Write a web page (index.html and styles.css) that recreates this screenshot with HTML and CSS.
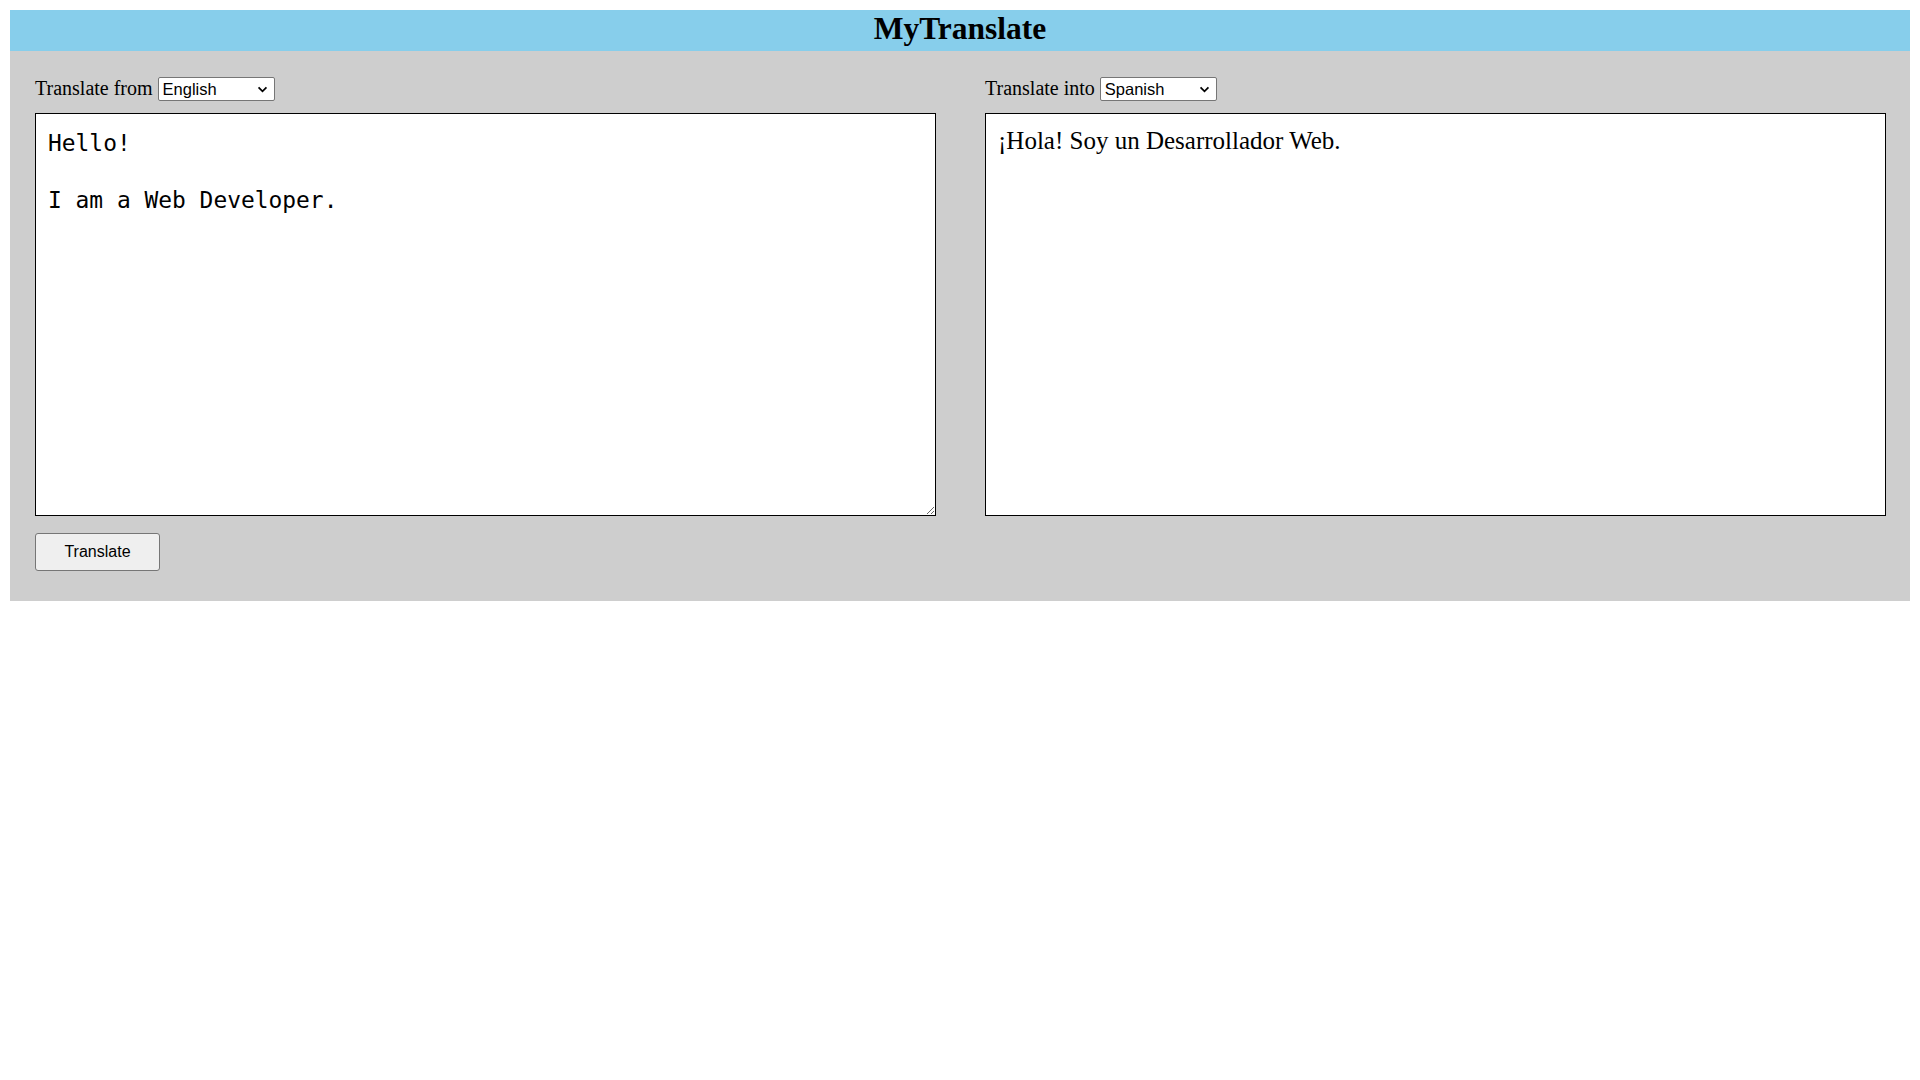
FILE: index.html
```html
<!DOCTYPE html>
<html lang="en">
<head>
<meta charset="utf-8">
<title>MyTranslate</title>
<link rel="stylesheet" href="styles.css">
</head>
<body>
<div class="app">
  <header class="app-header">
    <h1 class="app-title">MyTranslate</h1>
  </header>
  <main class="app-main">
    <div class="panes">
      <section class="pane">
        <div class="pane-bar">
          <label class="pane-label" for="from">Translate from</label>
          <select class="lang-select" id="from">
            <option>English</option>
            <option>Spanish</option>
          </select>
        </div>
        <textarea class="source-text">Hello!

I am a Web Developer.</textarea>
      </section>
      <section class="pane">
        <div class="pane-bar">
          <label class="pane-label" for="into">Translate into</label>
          <select class="lang-select" id="into">
            <option>Spanish</option>
            <option>English</option>
          </select>
        </div>
        <div class="result-text">¡Hola! Soy un Desarrollador Web.</div>
      </section>
    </div>
    <div class="actions">
      <button class="translate-btn" type="button">Translate</button>
    </div>
  </main>
</div>
</body>
</html>
```

FILE: styles.css
```css
body {
  margin: 10px;
  background: #ffffff;
  font-family: "Liberation Serif", "Times New Roman", serif;
  color: #000;
}

.app {
  width: 1900px;
  background: #cecece;
}

.app-header {
  background: #87ceeb;
  box-sizing: border-box;
  height: 41px;
  padding-top: 2px;
  text-align: center;
}

.app-title {
  margin: 0;
  font-family: "Liberation Serif", "Times New Roman", serif;
  font-size: 31.5px;
  font-weight: bold;
  line-height: 33px;
}

.app-main {
  padding: 26px 24px 30px 25px;
}

.panes {
  display: grid;
  grid-template-columns: 901px 901px;
  column-gap: 49px;
}

.pane-bar {
  display: flex;
  align-items: center;
  gap: 5px;
  height: 24px;
  margin-bottom: 12px;
}

.pane-label {
  font-size: 20px;
  line-height: 23px;
  position: relative;
  top: -1px;
}

.lang-select {
  -webkit-appearance: none;
  appearance: none;
  box-sizing: border-box;
  width: 117px;
  height: 24px;
  font-family: "Liberation Sans", Arial, sans-serif;
  font-size: 16.5px;
  color: #000;
  background-color: #fff;
  background-image: url("data:image/svg+xml,%3Csvg xmlns='http://www.w3.org/2000/svg' width='12' height='8' viewBox='0 0 12 8'%3E%3Cpath d='M1.5 1.5 L6 6 L10.5 1.5' fill='none' stroke='%23000' stroke-width='2'/%3E%3C/svg%3E");
  background-repeat: no-repeat;
  background-position: right 6px center;
  background-size: 11px 7px;
  border: 1px solid #767676;
  border-radius: 2px;
  padding: 0 20px 0 4px;
}

.source-text,
.result-text {
  box-sizing: border-box;
  width: 901px;
  height: 403px;
  margin: 0;
  border: 1px solid #000;
  background: #fff;
  color: #000;
  display: block;
}

.source-text {
  font-family: "DejaVu Sans Mono", "Liberation Mono", monospace;
  font-size: 22.9px;
  line-height: 28.5px;
  padding: 15px 12px 12px 12px;
  resize: both;
}

.result-text {
  font-family: "Liberation Serif", "Times New Roman", serif;
  font-size: 25px;
  padding: 13px 12px 12px 12px;
}

.actions {
  margin-top: 17px;
}

.translate-btn {
  width: 125px;
  height: 38px;
  padding: 0;
  font-family: "Liberation Sans", Arial, sans-serif;
  font-size: 16px;
  color: #000;
  background: #efefef;
  border: 1px solid #767676;
  border-radius: 3px;
}
```
